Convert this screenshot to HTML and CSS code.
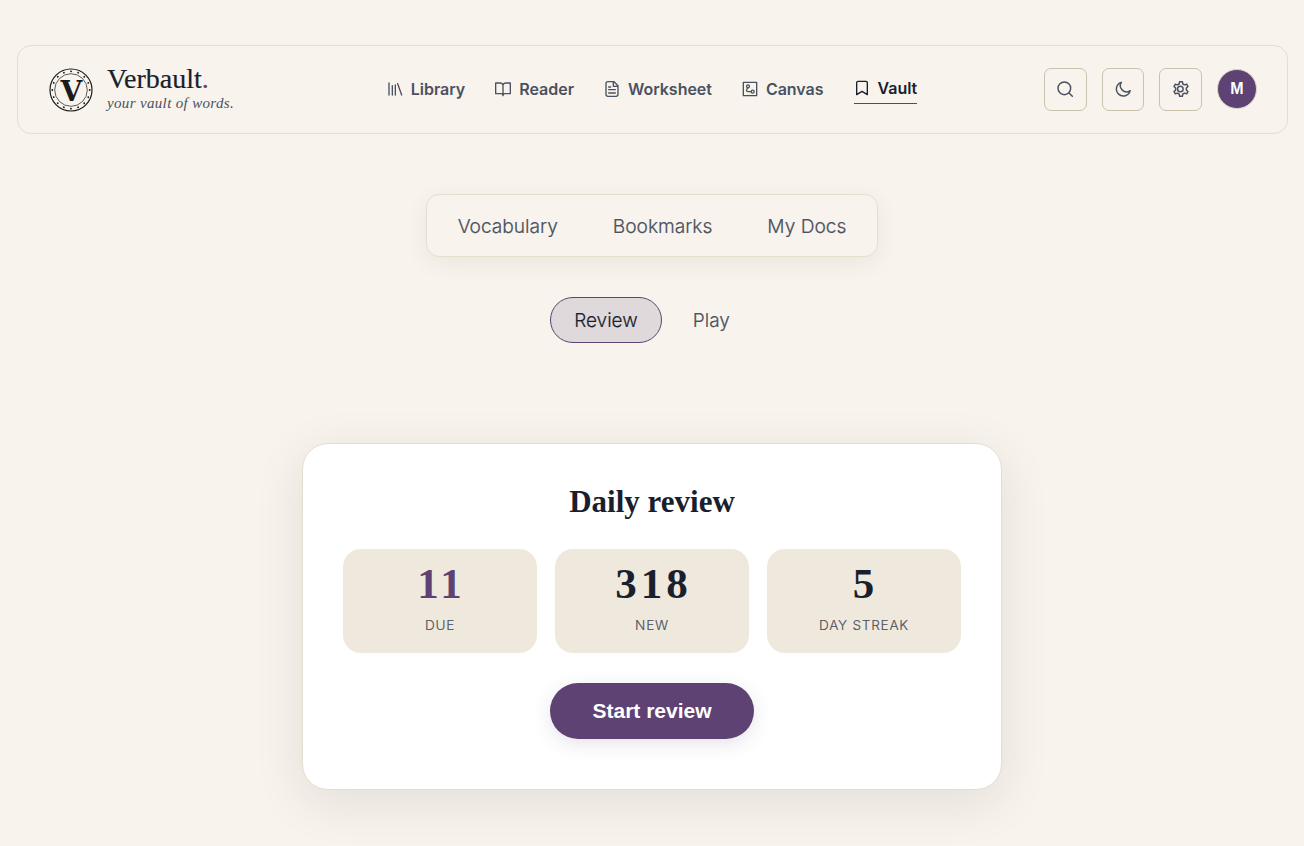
FILE: index.html
```html
<!DOCTYPE html>
<html lang="en">

<head>
    <meta charset="UTF-8">
    <meta name="viewport" content="width=device-width, initial-scale=1.0">
    <title>Verbault - Vault</title>
    <link rel="stylesheet" href="styles.css">
</head>

<body>

<header class="header">
    <a class="brand" href="#">
        <svg class="brand-logo" viewBox="0 0 44 44" fill="none" stroke="#1a1a1a">
            <circle cx="22" cy="22" r="21" stroke-width="1.2"/>
            <circle cx="22" cy="22" r="16.3" stroke-width="0.7"/>
            <circle cx="22" cy="22" r="18.7" stroke-width="1.8" stroke-linecap="round" pathLength="160" stroke-dasharray="0.1 9.9"/>
            <text class="brand-letter" x="22.3" y="33">V</text>
        </svg>
        <span class="brand-text">
            <span class="brand-name">Verbault<span class="dot">.</span></span>
            <span class="brand-tagline">your vault of words.</span>
        </span>
    </a>

    <nav class="nav">
        <a class="nav-link" href="#">
            <svg viewBox="0 0 24 24"><path d="M3 3v18M8 7v14M12.500 6v15M16 4l6 17"/></svg>
            <span>Library</span>
        </a>
        <a class="nav-link" href="#">
            <svg viewBox="0 0 24 24"><path d="M12 6v16M12 6a4 4 0 0 0-4-3H1v16h8a3 3 0 0 1 3 3 3 3 0 0 1 3-3h8V3h-7a4 4 0 0 0-4 3z"/></svg>
            <span>Reader</span>
        </a>
        <a class="nav-link" href="#">
            <svg viewBox="0 0 24 24"><path d="M15 1H6a3 3 0 0 0-3 3v16a3 3 0 0 0 3 3h12a3 3 0 0 0 3-3V7zM14 1v7h7M7 9h3M7 13h10M7 18h10"/></svg>
            <span>Worksheet</span>
        </a>
        <a class="nav-link" href="#">
            <svg viewBox="0 0 24 24"><path d="M2 2h20v20H2z"/><circle cx="9" cy="8" r="2.200"/><circle cx="16" cy="16" r="2.200"/><path d="M9 10.500c-3 2-3 5.500 0 5.500h4.500"/></svg>
            <span>Canvas</span>
        </a>
        <a class="nav-link active" href="#">
            <svg viewBox="0 0 24 24"><path d="M4 22V4a2 2 0 0 1 2-2h12a2 2 0 0 1 2 2v18l-8-5z"/></svg>
            <span>Vault</span>
        </a>
    </nav>

    <div class="actions">
        <button class="icon-btn" aria-label="Search">
            <svg viewBox="0 0 24 24"><circle cx="11" cy="11" r="9.500"/><path d="M18 18l5 5"/></svg>
        </button>
        <button class="icon-btn" aria-label="Dark mode">
            <svg viewBox="0 0 24 24"><path d="M9.500 2A10.500 10.500 0 1 0 22.800 14.500 9.300 9.300 0 0 1 9.500 2z"/></svg>
        </button>
        <button class="icon-btn" aria-label="Settings">
            <svg viewBox="0 0 24 24"><path d="M10 1h4l.8 3.500 2.400 1.300 3.300-1 2 3.500-2.500 2.300v2.800l2.500 2.300-2 3.500-3.300-1-2.400 1.300L14 23h-4l-.8-3.500-2.400-1.300-3.300 1-2-3.500L4 13.400v-2.800L1.500 8.300l2-3.500 3.300 1 2.400-1.300z"/><circle cx="11" cy="12" r="4.200"/></svg>
        </button>
        <span class="avatar">M</span>
    </div>
</header>

<main class="main">
    <div class="tabs">
        <a class="tab" href="#">Vocabulary</a>
        <a class="tab" href="#">Bookmarks</a>
        <a class="tab" href="#">My Docs</a>
    </div>

    <div class="modes">
        <button class="mode active">Review</button>
        <button class="mode">Play</button>
    </div>

    <section class="card">
        <h2>Daily review</h2>
        <div class="stats">
            <div class="stat">
                <div class="stat-value due">11</div>
                <div class="stat-label">Due</div>
            </div>
            <div class="stat">
                <div class="stat-value">318</div>
                <div class="stat-label">New</div>
            </div>
            <div class="stat">
                <div class="stat-value">5</div>
                <div class="stat-label">Day streak</div>
            </div>
        </div>
        <button class="start-btn">Start review</button>
    </section>
</main>

</body>
</html>
```
FILE: styles.css
```css
* {
    box-sizing: border-box;
}

body {
    margin: 0;
    padding-top: 45px;
    background: #f8f3ec;
    color: #1a1f2e;
    font-family: Inter, sans-serif;
    height: 846px;
    overflow: hidden;
}

a {
    color: inherit;
    text-decoration: none;
}

button {
    font-family: inherit;
    cursor: pointer;
}

.header {
    display: grid;
    grid-template-columns: 1fr auto 1fr;
    align-items: center;
    height: 89px;
    margin: 0 16px 0 17px;
    padding: 0 30px 2px 31px;
    border: 1px solid #e4ddd0;
    border-radius: 14px;
}

.brand {
    display: flex;
    align-items: center;
    gap: 14px;
}

.brand-logo {
    width: 44px;
    height: 44px;
    margin-top: 2px;
}

.brand-letter {
    fill: #1a1a1a;
    stroke: none;
    font-family: "DejaVu Serif", serif;
    font-size: 28px;
    font-weight: bold;
    text-anchor: middle;
}

.brand-text {
    display: flex;
    flex-direction: column;
    font-family: "Liberation Serif", serif;
}

.brand-name {
    font-size: 28px;
    line-height: 29px;
    -webkit-text-stroke: 0.2px currentColor;
}

.dot {
    color: #5d4273;
}

.brand-tagline {
    font-size: 15px;
    line-height: 20px;
    font-style: italic;
    letter-spacing: 0.34px;
    color: #4a5160;
}

.nav {
    display: flex;
    align-items: center;
    gap: 30px;
    margin-right: 2px;
}

.nav-link {
    display: flex;
    align-items: center;
    gap: 8px;
    font-size: 16px;
    font-weight: 600;
    letter-spacing: -0.02px;
    color: #4a5160;
}

.nav-link svg,
.icon-btn svg {
    width: 16px;
    height: 16px;
    fill: none;
    stroke: currentColor;
    stroke-width: 2;
    stroke-linecap: round;
    stroke-linejoin: round;
}

.icon-btn svg {
    stroke-width: 2.2;
}

.nav-link.active {
    color: #1a1f2e;
    height: 31px;
    border-bottom: 1px solid #5d4273;
}

.actions {
    display: flex;
    justify-content: flex-end;
    align-items: center;
    gap: 15px;
}

.icon-btn {
    display: flex;
    align-items: center;
    justify-content: center;
    width: 42.67px;
    height: 43px;
    margin-top: 1px;
    padding: 0;
    background: none;
    border: 1px solid #cbc2ad;
    border-radius: 7px;
    color: #4a5160;
}

.avatar {
    display: flex;
    align-items: center;
    justify-content: center;
    width: 40px;
    height: 40px;
    border: 1px solid #dcd4c8;
    border-radius: 50%;
    background: #5d4273;
    color: #fff;
    font-family: "Liberation Sans", sans-serif;
    font-size: 16px;
    font-weight: bold;
}

.main {
    display: flex;
    flex-direction: column;
    align-items: center;
}

.tabs {
    display: flex;
    align-items: center;
    justify-content: center;
    gap: 55px;
    width: 452px;
    height: 63px;
    margin-top: 60px;
    border: 1px solid #e6ddcf;
    border-radius: 13px;
    box-shadow: 0 6px 22px rgba(50, 55, 40, 0.07);
}

.tab {
    font-size: 19.2px;
    font-weight: 350;
    letter-spacing: -0.03px;
    color: #4a5160;
    -webkit-text-stroke: 0.2px currentColor;
}

.modes {
    display: flex;
    gap: 7px;
    margin-top: 40px;
}

.mode {
    height: 46px;
    padding: 0 23px;
    background: none;
    border: 1px solid transparent;
    border-radius: 23px;
    font-size: 19px;
    font-weight: 350;
    color: #4a5160;
    -webkit-text-stroke: 0.2px currentColor;
}

.mode.active {
    background: #dfd9db;
    border-color: #5d4273;
    color: #1a1f2e;
}

.card {
    display: flex;
    flex-direction: column;
    align-items: center;
    width: 700px;
    height: 347px;
    margin-top: 100px;
    padding: 40px 40px 38px;
    background: #fff;
    border: 1px solid #e4ddd0;
    border-radius: 26px;
    box-shadow: 0 12px 50px rgba(26, 50, 46, 0.1);
}

.card h2 {
    margin: 0 0 29px;
    font-family: "Liberation Serif", serif;
    font-size: 31px;
    line-height: 36px;
}

.stats {
    display: grid;
    grid-template-columns: repeat(3, 1fr);
    gap: 18px;
    width: 100%;
}

.stat {
    height: 104px;
    padding-top: 14px;
    background: #efe8dc;
    border-radius: 18px;
    text-align: center;
}

.stat-value {
    font-family: "Liberation Serif", serif;
    font-size: 43px;
    line-height: 42px;
    font-weight: bold;
    letter-spacing: 4px;
    margin-right: -3px;
}

.stat-value.due {
    color: #5d4273;
}

.stat-label {
    margin-top: 11px;
    font-size: 13.6px;
    line-height: 18px;
    font-weight: 350;
    letter-spacing: 0.75px;
    text-transform: uppercase;
    color: #4a5160;
    -webkit-text-stroke: 0.15px currentColor;
}

.start-btn {
    width: 204px;
    height: 56px;
    margin-top: 30px;
    border: none;
    border-radius: 28px;
    background: #5d4273;
    color: #fff;
    font-family: "Liberation Sans", sans-serif;
    font-size: 21px;
    font-weight: bold;
    box-shadow: 0 5px 18px rgba(93, 66, 115, 0.15);
}
```
